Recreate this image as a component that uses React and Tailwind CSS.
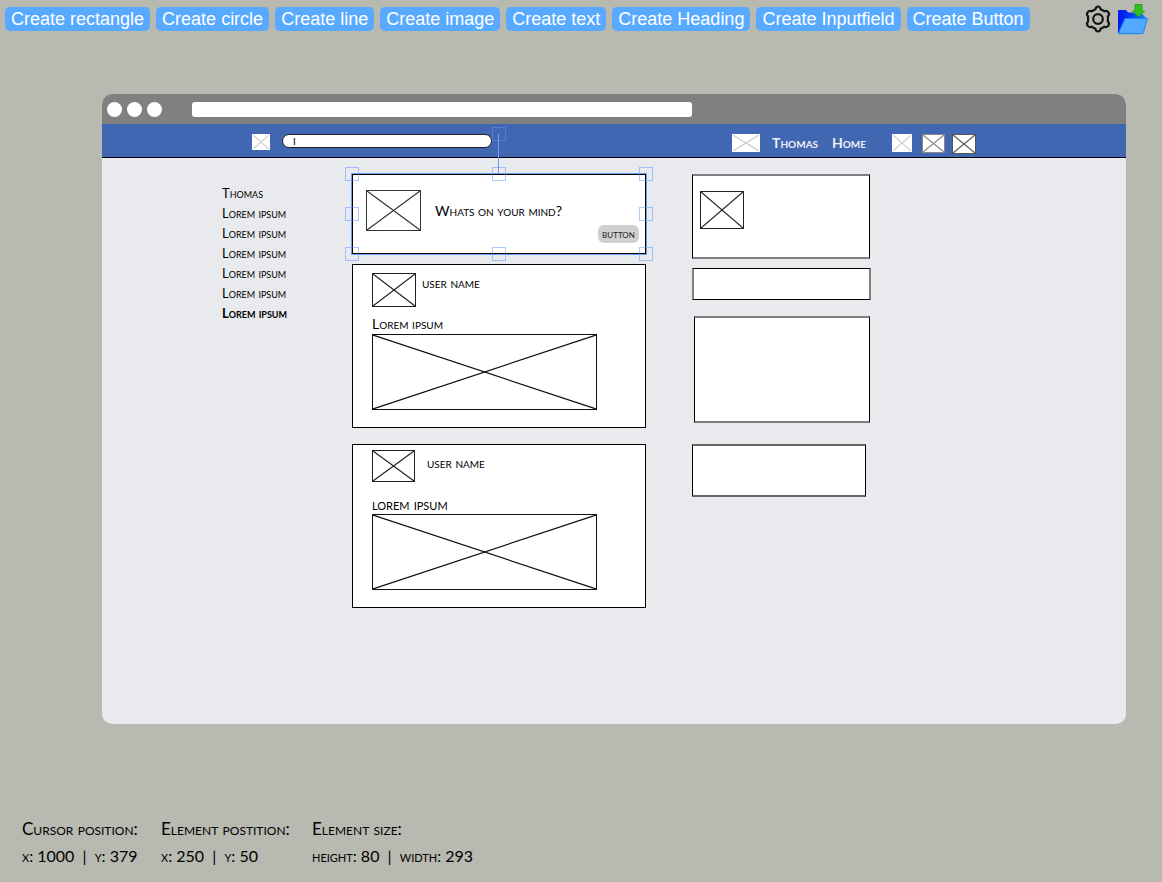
import React from "react";

const tools = ["rectangle", "circle", "line", "image", "text", "Heading", "Inputfield", "Button"];

const menu = ["Lorem ipsum", "Lorem ipsum", "Lorem ipsum", "Lorem ipsum", "Lorem ipsum"];

const handles = [
  "left-0 top-0",
  "left-1/2 top-0",
  "left-full top-0",
  "left-0 top-1/2",
  "left-full top-1/2",
  "left-0 top-full",
  "left-1/2 top-full",
  "left-full top-full",
  "left-1/2 -top-10",
];

function SettingsIcon() {
  return (
    <svg viewBox="0 0 26 28" className="h-7 w-[26px]" fill="none" stroke="#151515" strokeWidth="2.2" strokeLinejoin="round">
      <path d="M10.4 4.200 Q11 1.500 13 1.500 Q15 1.500 15.600 4.200 L19.400 6.300 Q22 5.300 23.400 7.300 Q24.900 9.600 22.900 11.400 V16.600 Q24.900 18.400 23.400 20.700 Q22 22.700 19.400 21.700 L15.600 23.800 Q15 26.500 13 26.500 Q11 26.500 10.400 23.800 L6.600 21.700 Q4 22.700 2.600 20.700 Q1.100 18.400 3.100 16.600 V11.400 Q1.100 9.600 2.600 7.300 Q4 5.300 6.600 6.300 Z" />
      <circle cx="13" cy="14" r="4.8" />
    </svg>
  );
}

function FolderIcon() {
  return (
    <svg viewBox="0 0 30 31" className="h-[31px] w-[30px]">
      <defs>
        <linearGradient id="folder-back" x1="0" x2="1">
          <stop offset="0" stopColor="#0018f0" />
          <stop offset="0.35" stopColor="#0030f0" />
          <stop offset="1" stopColor="#1684ff" />
        </linearGradient>
      </defs>
      <path d="M0 7 Q0 6 1 6 H8 L10 8.500 H23 Q24 8.500 24 9.500 L28 14 V20 L20 29.500 H0 Z" fill="url(#folder-back)" />
      <path d="M7 14.500 H29.300 L25.500 28.500 Q25.200 29.700 24 29.700 H1.200 Q0.400 29.700 0.800 28.500 Z" fill="#55a8ff" stroke="#1684ff" />
      <path d="M17 0.500 H24 V7 H26.500 L20.500 13 L14.500 7 H17 Z" fill="#2dc21b" stroke="#27940f" strokeWidth="0.8" />
    </svg>
  );
}

function ImageBox({ className }) {
  return (
    <svg className={`shrink-0 border border-current bg-white ${className}`} stroke="currentColor" strokeWidth="1.2">
      <line x1="0" y1="0" x2="100%" y2="100%" />
      <line x1="100%" y1="0" x2="0" y2="100%" />
    </svg>
  );
}

function Selection() {
  return (
    <div className="pointer-events-none absolute -inset-0.5 border border-[#6f9df0]">
      <div className="absolute -top-10 left-1/2 h-10 w-px -translate-x-full bg-[#6f9df0]" />
      {handles.map((place) => (
        <div key={place} className={`absolute size-3.5 -translate-1/2 border border-[#5c95ff]/50 ${place}`} />
      ))}
    </div>
  );
}

function Post({ children, caption, captionClass }) {
  return (
    <article className="flex h-[164px] flex-col border border-black bg-white pb-[17px] pl-[19px]">
      <div className="flex flex-1 items-start">{children}</div>
      <p className={`leading-5 ${captionClass}`}>{caption}</p>
      <ImageBox className="h-[76px] w-[225px] text-[#111111]" />
    </article>
  );
}

function Stat({ title, children }) {
  return (
    <div>
      <dt className="text-[17px]">{title}</dt>
      <dd className="whitespace-pre">{children}</dd>
    </div>
  );
}

export default function App() {
  return (
    <div className='flex min-h-screen flex-col bg-[#b8b9b0] font-["Liberation_Sans",sans-serif] text-black'>
      <header className="flex h-[38px] items-center justify-between pr-3.5 pl-[5px]">
        <div className="flex gap-1.5">
          {tools.map((tool) => (
            <button key={tool} className="h-6 rounded-[5px] bg-[#57aaff] px-1.5 text-[18px] leading-6 whitespace-nowrap text-white">
              Create {tool}
            </button>
          ))}
        </div>
        <div className="flex items-center gap-[7px]">
          <button aria-label="Settings"><SettingsIcon /></button>
          <button aria-label="Open"><FolderIcon /></button>
        </div>
      </header>

      <main className="mt-14 mr-9 ml-[102px] min-w-[900px] overflow-hidden rounded-[10px] bg-[#e9eaee] font-[Lato,sans-serif] whitespace-nowrap [font-variant-caps:small-caps]">
        <div className="flex h-[30px] items-center gap-[5px] bg-[#808080] pl-[5px]">
          <span className="size-[15px] rounded-full bg-white" />
          <span className="size-[15px] rounded-full bg-white" />
          <span className="size-[15px] rounded-full bg-white" />
          <div className="ml-[25px] h-[15px] w-[500px] rounded-[3px] bg-white" />
        </div>

        <nav className="flex h-[34px] items-start border-b border-black bg-[#4267b2] pt-2.5 pl-[150px]">
          <ImageBox className="h-4 w-[18px] border-white text-[#d0d0d0]" />
          <input
            aria-label="Search"
            defaultValue="I"
            className="ml-3 h-3.5 w-[210px] rounded-[7px] border border-[#222222] bg-white px-2.5 text-[10px] leading-3"
          />
          <ImageBox className="mr-3 ml-60 h-[18px] w-7 border-white text-[#cccccc]" />
          <a href="#profile" className="w-[60px] text-sm leading-[18px] font-bold text-[#eceef5]">Thomas</a>
          <a href="#home" className="w-[60px] text-sm leading-[18px] font-bold text-[#eceef5]">Home</a>
          <ImageBox className="mr-2.5 h-[18px] w-5 border-white text-[#cccccc]" />
          <ImageBox className="mr-[7px] h-[19px] w-[23px] text-[#888888]" />
          <ImageBox className="h-5 w-6 text-[#555555]" />
        </nav>

        <div className="flex min-h-[566px] items-start pt-4 pl-[120px]">
          <ul className="w-[130px] pt-[9px] text-[13px] leading-5">
            <li>Thomas</li>
            {menu.map((item, index) => (
              <li key={index}>{item}</li>
            ))}
            <li className="font-bold">Lorem ipsum</li>
          </ul>

          <div className="w-[294px]">
            <section className="relative mb-2.5 flex h-20 items-start border border-black bg-white pt-[15px] pl-[13px]">
              <ImageBox className="h-[41px] w-[55px] text-[#333333]" />
              <p className="ml-3.5 text-sm leading-[42px]">Whats on your mind?</p>
              <button className="mr-1.5 mb-2.5 ml-auto h-[18px] w-[41px] self-end rounded-md bg-[#d0d0d0] text-xs leading-4 text-[#222222] [font-variant-caps:small-caps]">
                button
              </button>
              <Selection />
            </section>
            <div className="flex flex-col gap-4">
              <Post caption="Lorem ipsum" captionClass="text-sm">
                <ImageBox className="mt-2 h-[34px] w-11 text-[#222222]" />
                <p className="mt-2 ml-1.5 text-sm leading-5">user name</p>
              </Post>
              <Post caption="lorem ipsum" captionClass="text-base">
                <ImageBox className="mt-[5px] h-8 w-[43px] text-[#222222]" />
                <p className="mt-2 ml-3 text-sm leading-5">user name</p>
              </Post>
            </div>
          </div>

          <div className="ml-[46px] w-[179px]">
            <div className="mr-px h-[85px] border-x border-y-2 border-x-black border-y-[#808080] bg-white pt-[15px] pl-[7px]">
              <ImageBox className="h-[38px] w-11 text-[#222222]" />
            </div>
            <div className="mt-[9px] h-8 border-x-2 border-y border-x-[#808080] border-y-black bg-white" />
            <div className="mt-4 mr-px ml-0.5 h-[107px] border-x border-y-2 border-x-black border-y-[#808080] bg-white" />
            <div className="mt-[21px] mr-[5px] h-[53px] border-x border-y-2 border-x-black border-y-[#666666] bg-white" />
          </div>
        </div>
      </main>

      <footer className="mt-auto px-[22px] pb-[13px] font-[Lato,sans-serif] [font-variant-caps:small-caps]">
        <dl className="grid grid-cols-[139px_151px_auto] text-base leading-[27px] whitespace-nowrap">
          <Stat title="Cursor position:">{"x: 1000  |  y: 379"}</Stat>
          <Stat title="Element postition:">{"x: 250  |  y: 50"}</Stat>
          <Stat title="Element size:">{"height: 80  |  width: 293"}</Stat>
        </dl>
      </footer>
    </div>
  );
}
